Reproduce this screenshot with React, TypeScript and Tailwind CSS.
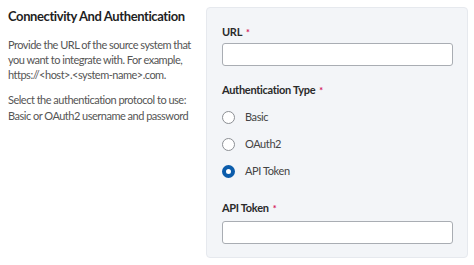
import { useState } from "react";

const options = ["Basic", "OAuth2", "API Token"];

function Label({ text }: { text: string }) {
  return (
    <div className="h-[15px] text-[11px] leading-[15px] font-bold tracking-[-0.3px] text-[#2a2a2a]">
      {text}
      <span className="ml-[4px] text-[#d4145a] text-[9px] leading-none">*</span>
    </div>
  );
}

export default function App() {
  const [auth, setAuth] = useState("API Token");

  return (
    <div
      className="w-[474px] h-[265px] bg-white flex"
      style={{ fontFamily: "Lato, 'Noto Sans', sans-serif" }}
    >
      {/* LEFT DESCRIPTION */}
      <div className="w-[206px] pl-2 pt-[8px]">
        <h2 className="text-[13px] leading-[16px] font-bold tracking-[-0.4px] text-[#1f1f1f]">
          Connectivity And Authentication
        </h2>
        <p className="mt-[13px] w-[186px] text-[11px] leading-[15px] tracking-[-0.5px] text-[#555]">
          Provide the URL of the source system that you want to integrate with. For example,
          https://&lt;host&gt;.&lt;system-name&gt;.com.
        </p>
        <p className="mt-[10px] w-[186px] text-[11px] leading-[16px] tracking-[-0.5px] text-[#555]">
          Select the authentication protocol to use: Basic or OAuth2 username and password
        </p>
      </div>

      {/* FORM PANEL */}
      <div className="mt-[7px] w-[262px] h-[251px] bg-[#f3f5f8] border border-[#e6e9ee] rounded-[4px] pl-[15px] pr-[14px] pt-[16px]">
        <Label text="URL" />
        <input className="mt-[4px] block w-full h-[23px] bg-white border border-[#a9adb3] rounded-[3px] outline-none" />

        <div className="mt-[16px]">
          <Label text="Authentication Type" />
        </div>
        <div className="mt-[10px] flex flex-col gap-[7px]">
          {options.map((opt) => (
            <label
              key={opt}
              className="flex items-center h-[20px] cursor-pointer"
              onClick={() => setAuth(opt)}
            >
              {auth === opt ? (
                <span className="w-[13px] h-[13px] rounded-full border-[4px] border-[#0b5cab] bg-white" />
              ) : (
                <span className="w-[13px] h-[13px] rounded-full border border-[#8c8f94] bg-white" />
              )}
              <span className="ml-[10px] text-[11px] tracking-[-0.4px] text-[#444]">{opt}</span>
            </label>
          ))}
        </div>

        <div className="mt-[19px]">
          <Label text="API Token" />
        </div>
        <input className="mt-[6px] block w-full h-[23px] bg-white border border-[#a9adb3] rounded-[3px] outline-none" />
      </div>
    </div>
  );
}
